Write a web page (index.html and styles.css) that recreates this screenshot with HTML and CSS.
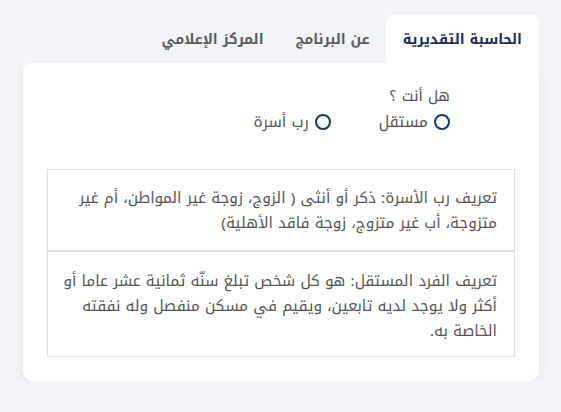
FILE: index.html
```html
<!DOCTYPE html>
<html lang="ar" dir="rtl">
<head>
  <meta charset="UTF-8">
  <meta name="viewport" content="width=device-width, initial-scale=1.0">
  <title>الحاسبة التقديرية</title>
  <link rel="stylesheet" href="styles.css">
</head>
<body>
  <div class="page">
    <ul class="tabs">
      <li class="tab active">الحاسبة التقديرية</li>
      <li class="tab">عن البرنامج</li>
      <li class="tab">المركز الإعلامي</li>
    </ul>

    <div class="card">
      <div class="question">
        <p class="question-label">هل أنت ؟</p>
        <div class="options">
          <label class="option"><span class="radio"></span>مستقل</label>
          <label class="option"><span class="radio"></span>رب أسرة</label>
        </div>
      </div>

      <div class="definitions">
        <div class="definition">
          تعريف رب الأسرة: ذكر أو أنثى ( الزوج، زوجة غير المواطن، أم غير متزوجة، أب غير متزوج، زوجة فاقد الأهلية)
        </div>
        <div class="definition">
          تعريف الفرد المستقل: هو كل شخص تبلغ سنّه ثمانية عشر عاما أو أكثر ولا يوجد لديه تابعين، ويقيم في مسكن منفصل وله نفقته الخاصة به.
        </div>
      </div>
    </div>
  </div>
</body>
</html>
```

FILE: styles.css
```css
/* Global Styles */
body {
  margin: 0;
  padding: 0;
  background-color: #f3f4f8;
  font-family: "Noto Kufi Arabic", "Noto Sans Arabic", "DejaVu Sans", sans-serif;
  color: #555;
}

.page {
  padding: 15px 22px 0 23px;
}

/* Tabs */
.tabs {
  list-style: none;
  margin: 0;
  padding: 0;
  display: flex;
}

.tab {
  height: 48px;
  line-height: 50px;
  padding: 0 16px;
  font-size: 14px;
  font-weight: bold;
  color: #5b5b5b;
}

.tab.active {
  background-color: white;
  color: #1c2c5c;
  border-radius: 8px 8px 0 0;
  padding: 0 17px;
}

/* Card */
.card {
  background-color: white;
  border-radius: 8px 0 10px 10px;
  box-shadow: 0 6px 14px rgba(40, 50, 90, 0.06);
  padding: 23px 24px 24px;
}

.question {
  padding-right: 65px;
}

.question-label {
  margin: 0;
  font-size: 15px;
  line-height: 20px;
}

.options {
  display: flex;
  gap: 48px;
  margin-top: 6px;
}

.option {
  display: flex;
  align-items: center;
  gap: 6px;
  font-size: 15.5px;
  line-height: 20px;
}

.radio {
  width: 12px;
  height: 12px;
  border: 2px solid #0f3a6b;
  border-radius: 50%;
}

/* Definitions */
.definitions {
  margin-top: 37px;
  border: 1px solid #e0e0e4;
}

.definition {
  padding: 15px 17px 15px 6px;
  font-size: 15.3px;
  line-height: 25px;
}

.definition + .definition {
  border-top: 2px solid #e0e0e4;
  padding-top: 16px;
  padding-bottom: 13px;
}
```
